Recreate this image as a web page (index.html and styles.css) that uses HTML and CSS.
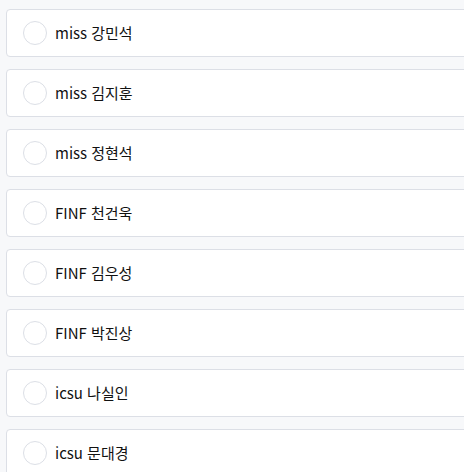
FILE: index.html
```html
<!DOCTYPE html>
<html lang="ko">
<head>
	<meta charset="UTF-8">
	<meta name="viewport" content="width=device-width, initial-scale=1.0">
	<title>Members</title>
	<link rel="stylesheet" href="styles.css">
</head>
<body>
	<div class="list">
		<div class="item"><span class="item__check"></span><span class="item__name">miss 강민석</span></div>
		<div class="item"><span class="item__check"></span><span class="item__name">miss 김지훈</span></div>
		<div class="item"><span class="item__check"></span><span class="item__name">miss 정현석</span></div>
		<div class="item"><span class="item__check"></span><span class="item__name">FINF 천건욱</span></div>
		<div class="item"><span class="item__check"></span><span class="item__name">FINF 김우성</span></div>
		<div class="item"><span class="item__check"></span><span class="item__name">FINF 박진상</span></div>
		<div class="item"><span class="item__check"></span><span class="item__name">icsu 나실인</span></div>
		<div class="item"><span class="item__check"></span><span class="item__name">icsu 문대경</span></div>
	</div>
</body>
</html>
```

FILE: styles.css
```css
*{
	box-sizing: border-box;
}
html, body{
	margin: 0;
	background: #f7f8fa;
	overflow: hidden;
}
body{
	padding: 9px 0 0 6px;
	font-family: "Noto Sans CJK KR", "Noto Sans", sans-serif;
	color: #111;
}
.list{
	width: 500px;
	display: flex;
	flex-direction: column;
	gap: 12px;
}
.item{
	height: 48px;
	display: flex;
	align-items: center;
	gap: 8px;
	padding-left: 16px;
	background: #fff;
	border: 1px solid #dcdfe6;
	border-radius: 4px;
}
.item__check{
	width: 24px;
	height: 24px;
	border: 1px solid #dcdfe6;
	border-radius: 50%;
	background: #fff;
	flex-shrink: 0;
}
.item__name{
	font-size: 15px;
	line-height: 20px;
}
```
